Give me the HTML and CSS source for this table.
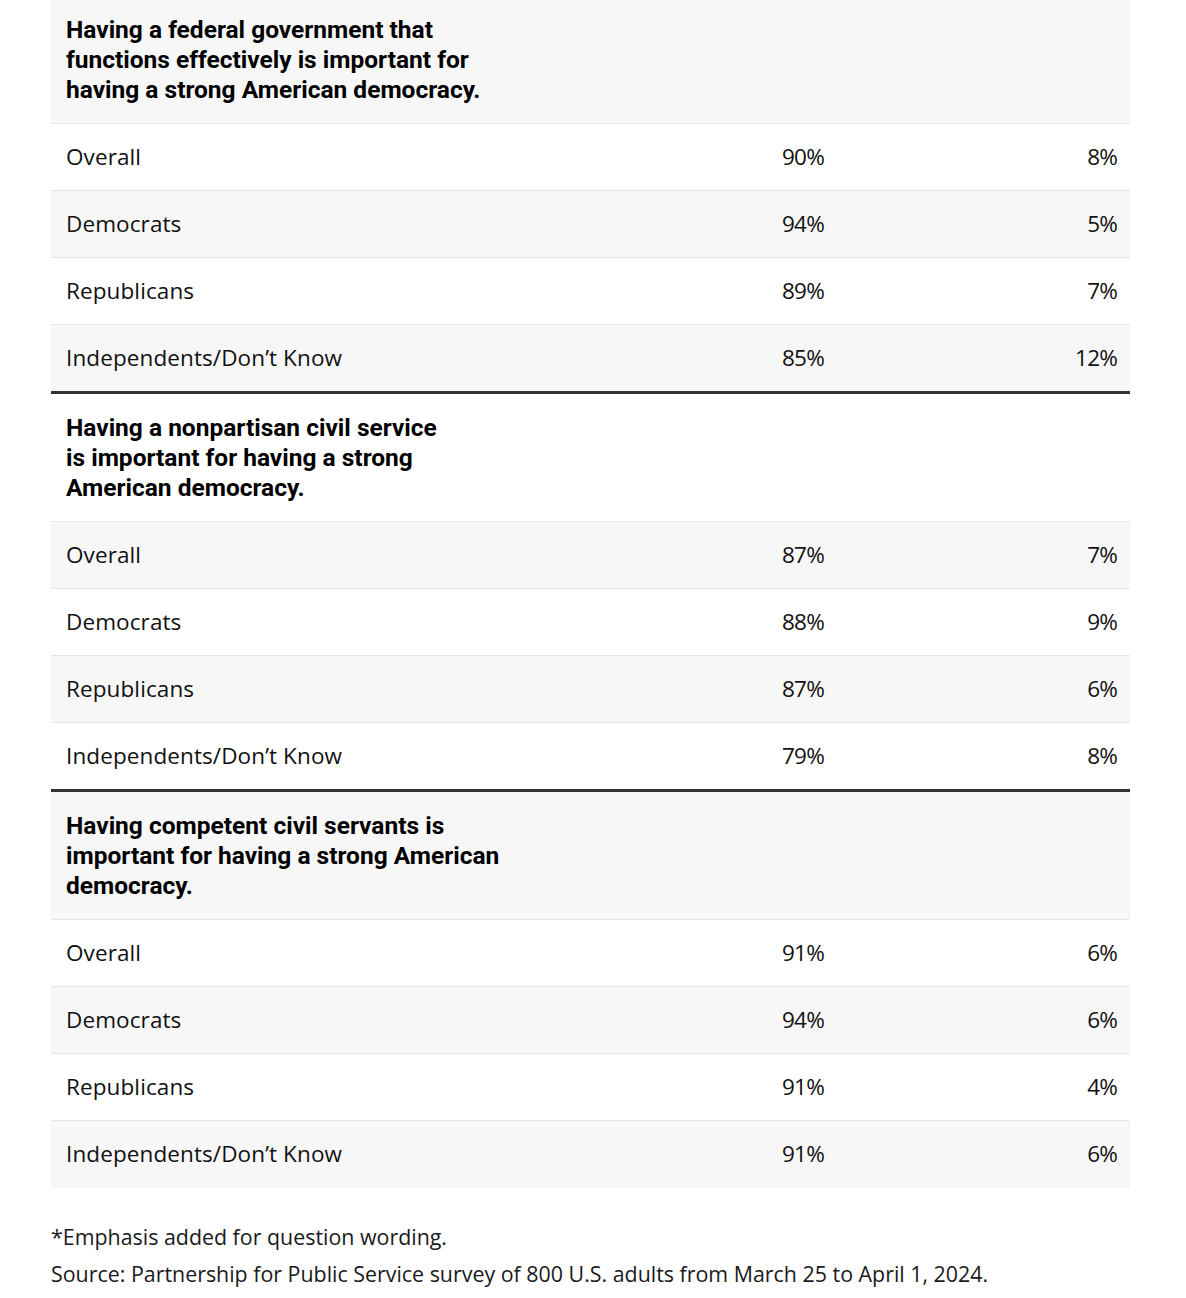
FILE: index.html
```html
<!DOCTYPE html>
<html lang="en">
<head>
<meta charset="utf-8">
<title>Survey table</title>
<link rel="stylesheet" href="styles.css">
</head>
<body>
<div class="wrap">
  <table class="survey">
    <colgroup>
      <col class="c-label">
      <col class="c-agree">
      <col class="c-disagree">
    </colgroup>
    <tbody>
      <tr class="q"><th colspan="3"><span class="ln">Having a federal government that</span><br><span class="ln">functions effectively is important for</span><br><span class="ln">having a strong American democracy.</span></th></tr>
      <tr><td>Overall</td><td class="v">90%</td><td class="r">8%</td></tr>
      <tr><td>Democrats</td><td class="v">94%</td><td class="r">5%</td></tr>
      <tr><td>Republicans</td><td class="v">89%</td><td class="r">7%</td></tr>
      <tr class="last"><td>Independents/Don’t Know</td><td class="v">85%</td><td class="r">12%</td></tr>
      <tr class="q"><th colspan="3"><span class="ln">Having a nonpartisan civil service</span><br><span class="ln">is important for having a strong</span><br><span class="ln">American democracy.</span></th></tr>
      <tr><td>Overall</td><td class="v">87%</td><td class="r">7%</td></tr>
      <tr><td>Democrats</td><td class="v">88%</td><td class="r">9%</td></tr>
      <tr><td>Republicans</td><td class="v">87%</td><td class="r">6%</td></tr>
      <tr class="last"><td>Independents/Don’t Know</td><td class="v">79%</td><td class="r">8%</td></tr>
      <tr class="q"><th colspan="3"><span class="ln">Having competent civil servants is</span><br><span class="ln">important for having a strong American</span><br><span class="ln">democracy.</span></th></tr>
      <tr><td>Overall</td><td class="v">91%</td><td class="r">6%</td></tr>
      <tr><td>Democrats</td><td class="v">94%</td><td class="r">6%</td></tr>
      <tr><td>Republicans</td><td class="v">91%</td><td class="r">4%</td></tr>
      <tr class="end"><td>Independents/Don’t Know</td><td class="v">91%</td><td class="r">6%</td></tr>
    </tbody>
  </table>
  <div class="notes">
    <p>*Emphasis added for question wording.</p>
    <p>Source: Partnership for Public Service survey of 800 U.S. adults from March 25 to April 1, 2024.</p>
  </div>
</div>
</body>
</html>
```
FILE: styles.css
```css
html, body {
  margin: 0;
  padding: 0;
  background: #ffffff;
}
body {
  font-family: "Open Sans", "Liberation Sans", sans-serif;
  color: #111111;
}
.wrap {
  padding: 0 56px 0 51px;
  margin-top: -4px;
}
.survey {
  width: 1079px;
  border-collapse: collapse;
  table-layout: fixed;
}
.c-label { width: 716px; }
.c-agree { width: 200px; }
.c-disagree { width: 163px; }
.survey tr:nth-child(odd) { background: #f7f7f7; }
.survey tr:nth-child(even) { background: #ffffff; }
.survey td {
  height: 64px;
  padding: 0 15px 2px;
  font-size: 22.5px;
  font-weight: 400;
  letter-spacing: 0.1px;
  color: #111111;
  border-bottom: 1px solid #e6e6e6;
  vertical-align: middle;
  white-space: nowrap;
}
.survey td.v { letter-spacing: -0.8px; }
.survey td.r { text-align: right; padding-right: 13px; letter-spacing: -0.8px; }
.survey tr.last td { border-bottom: 3px solid #333333; }
.survey tr.end td { border-bottom: 0; height: 65px; }
.survey th {
  text-align: left;
  padding: 19px 15px 18px;
  font-family: "Roboto", "Liberation Sans", sans-serif;
  font-size: 24.5px;
  font-weight: 700;
  line-height: 30px;
  color: #000000;
  border-bottom: 1px solid #e6e6e6;
}
.survey th .ln { white-space: nowrap; }
.notes {
  margin-top: 30px;
}
.notes p {
  margin: 0;
  font-size: 21.4px;
  line-height: 37px;
  color: #1a1a1a;
}
```
